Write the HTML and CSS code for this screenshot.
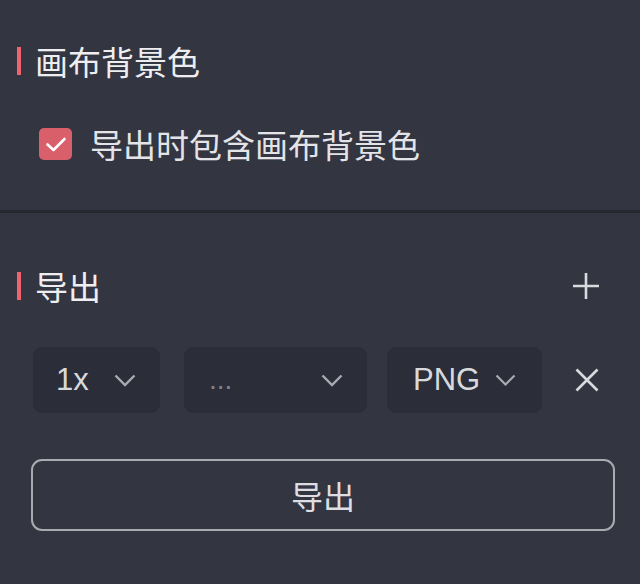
FILE: index.html
```html
<!DOCTYPE html>
<html lang="zh">
<head>
<meta charset="utf-8">
<link rel="stylesheet" href="styles.css">
</head>
<body>
<div class="panel">
  <section class="sec sec-bg">
    <div class="heading"><span class="bar"></span><span class="title">画布背景色</span></div>
    <label class="check-row">
      <span class="checkbox">
        <svg width="22" height="17" viewBox="0 0 22 17"><path d="M2.5 8.5 L8.5 14 L19.5 3" fill="none" stroke="#fff" stroke-width="2.6" stroke-linecap="round" stroke-linejoin="round"/></svg>
      </span>
      <span class="check-label">导出时包含画布背景色</span>
    </label>
  </section>
  <div class="divider"></div>
  <section class="sec sec-export">
    <div class="heading">
      <span class="bar"></span><span class="title">导出</span>
      <span class="plus">
        <svg width="26" height="26" viewBox="0 0 26 26"><path d="M13 0 V26 M0 13 H26" stroke="#d9dade" stroke-width="2.6"/></svg>
      </span>
    </div>
    <div class="row">
      <div class="select s1"><span class="val">1x</span><svg class="chev" width="22" height="13" viewBox="0 0 22 13"><path d="M1.5 1.5 L11 11 L20.5 1.5" fill="none" stroke="#a9aab1" stroke-width="2.4"/></svg></div>
      <div class="select s2"><span class="val muted">...</span><svg class="chev" width="22" height="13" viewBox="0 0 22 13"><path d="M1.5 1.5 L11 11 L20.5 1.5" fill="none" stroke="#a9aab1" stroke-width="2.4"/></svg></div>
      <div class="select s3"><span class="val">PNG</span><svg class="chev" width="21" height="12" viewBox="0 0 21 12"><path d="M1.5 1.5 L10.5 10.5 L19.5 1.5" fill="none" stroke="#a9aab1" stroke-width="2.2"/></svg></div>
      <span class="close">
        <svg width="24" height="24" viewBox="0 0 24 24"><path d="M1.5 1.5 L22.5 22.5 M22.5 1.5 L1.5 22.5" stroke="#d9dade" stroke-width="2.6"/></svg>
      </span>
    </div>
    <button class="export-btn">导出</button>
  </section>
</div>
</body>
</html>
```
FILE: styles.css
```css
html, body {
  margin: 0;
  padding: 0;
  background: #333541;
}
body {
  width: 640px;
  height: 584px;
  overflow: hidden;
  font-family: "Noto Sans CJK SC", "Noto Sans", sans-serif;
  color: #ececef;
}
.panel {
  display: flex;
  flex-direction: column;
}
.sec-bg {
  padding: 44px 0 50px 17px;
  display: flex;
  flex-direction: column;
  gap: 50px;
}
.heading {
  display: flex;
  align-items: center;
  height: 34px;
}
.bar {
  width: 4px;
  height: 28px;
  background: #f0636c;
  margin-right: 14px;
}
.title {
  font-size: 33px;
  line-height: 34px;
  color: #eeeef1;
}
.check-row {
  display: flex;
  align-items: center;
  height: 32px;
  margin-left: 22px;
}
.checkbox {
  width: 33px;
  height: 32px;
  border-radius: 5px;
  background: #d9606a;
  display: flex;
  align-items: center;
  justify-content: center;
  margin-right: 18px;
}
.check-label {
  font-size: 33px;
  line-height: 34px;
  color: #e4e4e8;
}
.divider {
  height: 3px;
  background: #27282f;
}
.sec-export {
  padding: 56px 0 0 17px;
  display: flex;
  flex-direction: column;
}
.plus {
  margin-left: auto;
  margin-right: 41px;
  display: flex;
}
.row {
  margin-top: 44px;
  margin-left: 16px;
  display: flex;
  align-items: center;
  height: 66px;
}
.select {
  height: 66px;
  border-radius: 9px;
  background: #2b2d39;
  display: flex;
  align-items: center;
  justify-content: space-between;
  box-sizing: border-box;
  padding: 0 24px 0 23px;
}
.s1 { width: 127px; }
.s2 { width: 183px; margin-left: 24px; padding-left: 25px; }
.s3 { width: 155px; margin-left: 20px; padding-left: 26px; justify-content: flex-start; gap: 15px; }
.val {
  font-family: "Liberation Sans", Arial, sans-serif;
  font-size: 31px;
  color: #d8d9dd;
  line-height: 40px;
}
.muted {
  color: #80828c;
  font-size: 28px;
}
.chev { display: block; }
.close {
  margin-left: 33px;
  display: flex;
}
.export-btn {
  margin-top: 46px;
  margin-left: 14px;
  width: 584px;
  height: 72px;
  box-sizing: border-box;
  border: 2px solid #aaabb1;
  border-radius: 11px;
  background: transparent;
  font-family: "Noto Sans CJK SC", "Noto Sans", sans-serif;
  font-size: 32px;
  color: #dedee2;
  padding: 0;
}
```
